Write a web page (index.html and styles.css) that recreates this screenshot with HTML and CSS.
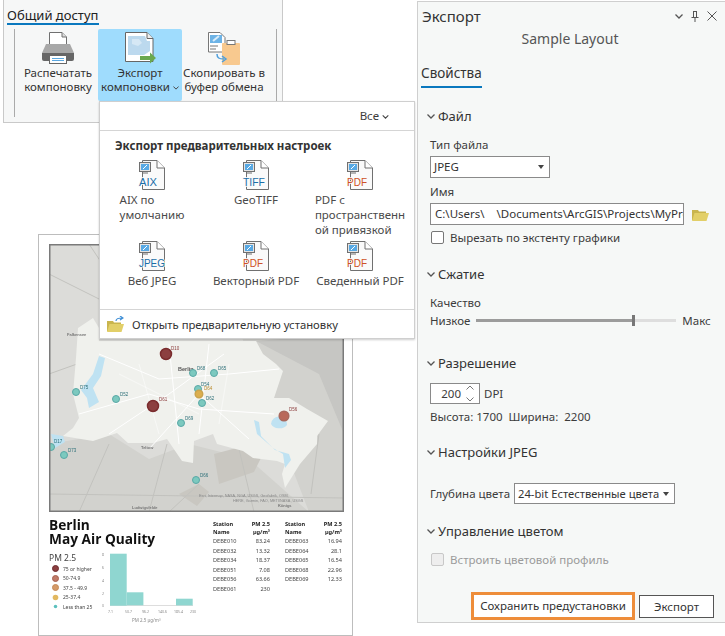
FILE: index.html
```html
<!DOCTYPE html>
<html>
<head>
<title>Экспорт компоновки</title>
<link rel="stylesheet" href="styles.css">
</head>
<body>

<svg class="defs" width="0" height="0">
    <defs>
        <symbol id="doc" viewBox="0 0 26 30">
            <path d="M3.5 .5H18l7.5 7.500V29.5H3.5Z" fill="#fafafa" stroke="#707070"/>
            <path d="M18 .5V8h7.5" fill="#fff" stroke="#707070"/>
            <rect x=".5" y="2.5" width="11" height="9" fill="#e4e4e4" stroke="#707070"/>
            <rect x="2" y="4" width="8" height="6" fill="#58a9e4"/>
            <path d="M4 9l4-4" stroke="#fff"/>
            <path d="M3 13h6" stroke="#707070"/>
        </symbol>
        <symbol id="folder" viewBox="0 0 17 14">
            <path d="M0 3h6l1 1.500h7V13H0Z" fill="#c9b54e"/>
            <path d="M2.500 6H17l-2.500 8H0Z" fill="#e2cf68"/>
        </symbol>
        <symbol id="chev" viewBox="0 0 8 5">
            <path d="M.5.5L4 4 7.500.5" fill="none" stroke="currentColor" stroke-width="1.300"/>
        </symbol>
    </defs>
</svg>

<div class="ribbon window">
    <div class="ribbon-tab">Общий доступ</div>
    <div class="ribbon-row">
        <div class="ribbon-btn first">
            <svg class="ribbon-icon" width="34" height="34" viewBox="0 0 34 34">
                <path d="M8.500 1.500H21l4.500 4.500V15H8.500Z" fill="#fff" stroke="#707070"/>
                <path d="M21 1.500V6h4.500" fill="#ddd" stroke="#707070"/>
                <path d="M5 13h24l4 9H1Z" fill="#a8a8a8"/>
                <path d="M1 22h32v6a2 2 0 0 1-2 2H3a2 2 0 0 1-2-2Z" fill="#666"/>
                <rect x="8.500" y="24.500" width="17" height="8" fill="#fff" stroke="#666"/>
                <path d="M11 27.500h12M11 29.500h12" stroke="#5aa7e0"/>
            </svg>
            <span>Распечатать<br>компоновку</span>
        </div>
        <div class="ribbon-btn active">
            <svg class="ribbon-icon" width="34" height="34" viewBox="0 0 34 34">
                <path d="M2.500 1.500H24l6 6V30.500H2.500Z" fill="#fff" stroke="#666"/>
                <path d="M24 1.500V7.500h6" fill="#eee" stroke="#666"/>
                <path d="M5 5h17l2 5h3v10l-6 4H5Z" fill="#bcd9ee"/>
                <path d="M9 8h7l3 4-4 3-6-2Z" fill="#d6e8f5"/>
                <path d="M17 25h10v-3.500l6 5.500-6 5.500V29H17Z" fill="#6aa84f"/>
            </svg>
            <span>Экспорт<br>компоновки<svg class="chev-sm" width="6" height="4"><use href="#chev"/></svg></span>
        </div>
        <div class="ribbon-btn">
            <svg class="ribbon-icon" width="34" height="34" viewBox="0 0 34 34">
                <path d="M1.500 1.500H13l5 5V21H1.500Z" fill="#fff" stroke="#777"/>
                <rect x="3" y="4" width="12" height="8" fill="#6db3e6"/>
                <path d="M6 10l6-5" stroke="#d8ecfa" stroke-width="2"/>
                <path d="M3 15h8M3 18h6" stroke="#777"/>
                <rect x="15" y="12" width="18" height="22" rx="1" fill="#f8c98f"/>
                <rect x="20" y="9.500" width="8" height="4" fill="#fff" stroke="#777"/>
                <path d="M10 23c0 4 2 5 7 5" fill="none" stroke="#4f9fdc" stroke-width="1.500"/>
                <path d="M15 25l4 3-4 3" fill="none" stroke="#4f9fdc" stroke-width="1.500"/>
            </svg>
            <span>Скопировать в<br>буфер обмена</span>
        </div>
    </div>
</div>

<div class="sheet window">
    <svg class="map" width="295" height="268" viewBox="0 0 295 268">
        <rect width="295" height="268" fill="#dcdcd9"/>
        <path d="M180 60L295 60V268H0V200L60 190 100 215 140 200 200 215 260 268Z" fill="#d2d2ce"/>
        <path d="M207 97L295 90V190L270 130Z" fill="#c6c6c3"/>
        <path d="M165 210l30-8 20 6-10 20-35 12Z M130 250l20-10 10 8-12 14Z" fill="#c9c7c1"/>
        <path d="M0 30L60 60M40 0L80 60M0 130L28 120M120 0L150 70M230 0L260 90M60 200L30 268M118 200L100 268M190 205L205 268M150 240L120 268M270 190L262 250M0 250L295 254" stroke="#c2c2be" fill="none"/>
        <path d="M29 84L44 74 50 84 50 97 207 97 214 110 227 120 234 127 225 154 240 154 258 165 279 177 268 192 268 200 251 220 236 244 233 230 236 220 228 217 204 214 194 207 168 200 164 190 145 197 144 219 133 217 118 195 104 199 79 199 68 189 44 197 14 192 24 184 30 174 24 150 27 114Z" fill="#f0f1ed"/>
        <path d="M50 112l6 2-4 18-8 12 6 14-10 6-2-10-6-8 12-16Z M222 180a8 8 0 1 1 16 1a9 7 0 0 1-16-1Z M205 176l3 14 16 14 10 6 2 14 6-8-2-6-14-4-14-14-2-14Z M2 190l12 2 2 6-10 6Z" fill="#bfe2f2"/>
        <path d="M50 110L110 135 180 130 230 125M30 170L100 150 150 165 225 170M120 100L130 200M160 100L150 190M60 190L120 150 175 110M100 205L150 150 200 195" fill="none" stroke="#fff" stroke-width="1"/>
        <path d="M70 130L150 170M90 120L110 190M180 120L170 180" fill="none" stroke="#fff" stroke-width=".5"/>
        <text class="place" x="18" y="92">Falkensee</text>
        <text class="place city" x="129" y="127">Berlin</text>
        <text class="place" x="92" y="205">Teltow</text>
        <circle class="pt red" cx="117" cy="110" r="5.500"/>
        <circle class="pt red" cx="104" cy="162" r="5.500"/>
        <circle class="pt mid" cx="235" cy="172" r="4.800"/>
        <circle class="pt teal" cx="144" cy="129" r="3.500"/>
        <circle class="pt teal" cx="165" cy="129" r="3.500"/>
        <circle class="pt teal" cx="149" cy="145" r="3.500"/>
        <circle class="pt low" cx="150" cy="150" r="3.800"/>
        <circle class="pt teal" cx="153" cy="159" r="3.500"/>
        <circle class="pt teal" cx="67" cy="155" r="3.500"/>
        <circle class="pt teal" cx="27" cy="148" r="3.500"/>
        <circle class="pt teal" cx="132" cy="179" r="3.500"/>
        <circle class="pt teal" cx="2" cy="203" r="3.500"/>
        <circle class="pt teal" cx="15" cy="211" r="3.500"/>
        <circle class="pt teal" cx="147" cy="236" r="3.500"/>
        <text class="tag rd" x="122" y="106">D10</text>
        <text class="tag rd" x="110" y="157">D61</text>
        <text class="tag rd" x="240" y="167">D56</text>
        <text class="tag" x="148" y="126">D68</text>
        <text class="tag" x="169" y="126">D65</text>
        <text class="tag" x="152" y="142">D54</text>
        <text class="tag or" x="155" y="146">D64</text>
        <text class="tag" x="157" y="156">D62</text>
        <text class="tag" x="71" y="152">D52</text>
        <text class="tag" x="31" y="145">D75</text>
        <text class="tag" x="136" y="176">D69</text>
        <text class="tag" x="5" y="199">D17</text>
        <text class="tag" x="19" y="208">D73</text>
        <text class="tag" x="151" y="233">D66</text>
        <text class="credit" x="150" y="253">Esri, Intermap, NASA, NGA, USGS, Geofabrik, OSM,</text>
        <text class="credit" x="184" y="258">HERE, Garmin, FAO, METI/NASA, USGS</text>
        <text class="place" x="83" y="265">Ludwigsfelde</text>
        <text class="place" x="229" y="263">Königs</text>
        <rect x=".75" y=".75" width="293.500" height="266.500" fill="none" stroke="#7a7a7a" stroke-width="1.500"/>
    </svg>
    <div class="sheet-bottom">
        <div class="sheet-left">
            <h1 class="sheet-title">Berlin<br>May Air Quality</h1>
            <div class="legend-row">
                <div class="legend">
                    <div class="legend-head">PM 2.5</div>
                    <div class="legend-item"><i class="dot d1"></i>75 or higher</div>
                    <div class="legend-item"><i class="dot d2"></i>50-74.9</div>
                    <div class="legend-item"><i class="dot d3"></i>37.5 - 49.9</div>
                    <div class="legend-item"><i class="dot d4"></i>25-37.4</div>
                    <div class="legend-item"><i class="dot d5"></i>Less than 25</div>
                </div>
                <svg class="chart" width="96" height="76" viewBox="0 0 96 76">
                    <path d="M10 55.500H93" stroke="#ddd"/>
                    <rect x="10" y="3.700" width="16.700" height="52" fill="#8fd6d0"/>
                    <rect x="26.700" y="42.300" width="16.700" height="13" fill="#8fd6d0"/>
                    <rect x="76" y="48.700" width="16.700" height="6.700" fill="#8fd6d0"/>
                    <text class="ax" x="2" y="6">8</text>
                    <text class="ax" x="2" y="19">6</text>
                    <text class="ax" x="2" y="32">4</text>
                    <text class="ax" x="2" y="45">2</text>
                    <text class="ax" x="2" y="57">0</text>
                    <text class="ax" x="8" y="63">7.1</text>
                    <text class="ax" x="25" y="63">50.7</text>
                    <text class="ax" x="42" y="63">96.2</text>
                    <text class="ax" x="58" y="63">140.6</text>
                    <text class="ax" x="74" y="63">185.4</text>
                    <text class="ax" x="90" y="63">230</text>
                    <text class="ax-title" x="32" y="72">PM 2.5 µg/m³</text>
                </svg>
            </div>
        </div>
        <div class="stations">
            <div class="st-col">
                <div class="st-row st-head"><span>Station<br>Name</span><span>PM 2.5<br>µg/m³</span></div>
                <div class="st-row"><span>DEBE010</span><span>83.24</span></div>
                <div class="st-row"><span>DEBE032</span><span>13.32</span></div>
                <div class="st-row"><span>DEBE034</span><span>18.37</span></div>
                <div class="st-row"><span>DEBE051</span><span>7.08</span></div>
                <div class="st-row"><span>DEBE056</span><span>63.66</span></div>
                <div class="st-row"><span>DEBE061</span><span>230</span></div>
            </div>
            <div class="st-col">
                <div class="st-row st-head"><span>Station<br>Name</span><span>PM 2.5<br>µg/m³</span></div>
                <div class="st-row"><span>DEBE063</span><span>16.94</span></div>
                <div class="st-row"><span>DEBE064</span><span>28.1</span></div>
                <div class="st-row"><span>DEBE065</span><span>16.54</span></div>
                <div class="st-row"><span>DEBE068</span><span>22.96</span></div>
                <div class="st-row"><span>DEBE069</span><span>12.33</span></div>
            </div>
        </div>
    </div>
</div>

<div class="menu window">
    <div class="menu-top">Все<svg class="chev-sm" width="7" height="4"><use href="#chev"/></svg></div>
    <div class="menu-heading">Экспорт предварительных настроек</div>
    <div class="preset-grid">
        <div class="preset">
            <svg class="doc-wrap" width="26" height="30" viewBox="0 0 26 30"><use href="#doc" width="26" height="30"/><text class="doc-label blue" x="0" y="26" textLength="18" lengthAdjust="spacingAndGlyphs">AIX</text></svg>
            <div class="preset-name">AIX по<br>умолчанию</div>
        </div>
        <div class="preset">
            <svg class="doc-wrap" width="26" height="30" viewBox="0 0 26 30"><use href="#doc" width="26" height="30"/><text class="doc-label blue" x="0" y="26" textLength="22" lengthAdjust="spacingAndGlyphs">TIFF</text></svg>
            <div class="preset-name">GeoTIFF</div>
        </div>
        <div class="preset">
            <svg class="doc-wrap" width="26" height="30" viewBox="0 0 26 30"><use href="#doc" width="26" height="30"/><text class="doc-label orange" x="0" y="26" textLength="20" lengthAdjust="spacingAndGlyphs">PDF</text></svg>
            <div class="preset-name">PDF с<br>пространственн<br>ой привязкой</div>
        </div>
        <div class="preset">
            <svg class="doc-wrap" width="26" height="30" viewBox="0 0 26 30"><use href="#doc" width="26" height="30"/><text class="doc-label jpeg-label blue" x="0" y="26" textLength="26" lengthAdjust="spacingAndGlyphs">JPEG</text></svg>
            <div class="preset-name">Веб JPEG</div>
        </div>
        <div class="preset">
            <svg class="doc-wrap" width="26" height="30" viewBox="0 0 26 30"><use href="#doc" width="26" height="30"/><text class="doc-label orange" x="0" y="26" textLength="20" lengthAdjust="spacingAndGlyphs">PDF</text></svg>
            <div class="preset-name">Векторный PDF</div>
        </div>
        <div class="preset">
            <svg class="doc-wrap" width="26" height="30" viewBox="0 0 26 30"><use href="#doc" width="26" height="30"/><text class="doc-label orange" x="0" y="26" textLength="20" lengthAdjust="spacingAndGlyphs">PDF</text></svg>
            <div class="preset-name">Сведенный PDF</div>
        </div>
    </div>
    <div class="menu-foot">
        <svg width="17" height="16" viewBox="0 0 17 16">
            <use href="#folder" y="2" width="17" height="14"/>
            <path d="M9 5c0-2 2-3 6-3M13 0l3 2-3 2" fill="none" stroke="#3f8fd6" stroke-width="1.200"/>
        </svg>
        <span>Открыть предварительную установку</span>
    </div>
</div>

<div class="panel window">
    <div class="panel-head">
        <span class="panel-title">Экспорт</span>
        <span class="panel-tools">
            <svg width="8" height="5"><use href="#chev"/></svg>
            <svg width="8" height="11" viewBox="0 0 8 11"><path d="M2 .5h4M2.500 1v5M5.500 1v5M.5 6.500h7M4 7v4" fill="none" stroke="#555"/></svg>
            <svg width="10" height="10" viewBox="0 0 10 10"><path d="M.5.5l9 9M9.500.5l-9 9" stroke="#555"/></svg>
        </span>
    </div>
    <div class="panel-sub">Sample Layout</div>
    <div class="panel-tab">Свойства</div>

    <div class="sec-title first"><svg class="sec-chev" width="8" height="5"><use href="#chev"/></svg>Файл</div>
    <div class="field-label">Тип файла</div>
    <div class="combo file-type">JPEG<i class="caret"></i></div>
    <div class="field-label name-label">Имя</div>
    <div class="name-row">
        <div class="path-box">C:\Users\&nbsp;&nbsp;&nbsp;&nbsp;\Documents\ArcGIS\Projects\MyProject</div>
        <svg width="17" height="14" viewBox="0 0 17 14"><use href="#folder" width="17" height="14"/></svg>
    </div>
    <label class="check-row"><i class="check"></i>Вырезать по экстенту графики</label>

    <div class="sec-title compress"><svg class="sec-chev" width="8" height="5"><use href="#chev"/></svg>Сжатие</div>
    <div class="field-label quality">Качество</div>
    <div class="slider-row">
        <span>Низкое</span>
        <div class="slider"><div class="slider-fill"></div><div class="slider-thumb"></div></div>
        <span>Макс</span>
    </div>

    <div class="sec-title resolution"><svg class="sec-chev" width="8" height="5"><use href="#chev"/></svg>Разрешение</div>
    <div class="dpi-row">
        <div class="spin">200
            <svg width="8" height="17" viewBox="0 0 8 17"><path d="M.5 4.500L4 1l3.500 3.500M.5 12.500L4 16l3.500-3.500" fill="none" stroke="#777"/></svg>
        </div>
        <span>DPI</span>
    </div>
    <div class="dims">Высота: 1700&nbsp; Ширина:&nbsp; 2200</div>

    <div class="sec-title jpeg"><svg class="sec-chev" width="8" height="5"><use href="#chev"/></svg>Настройки JPEG</div>
    <div class="depth-row">
        <span>Глубина цвета</span>
        <div class="combo depth">24-bit Естественные цвета<i class="caret"></i></div>
    </div>

    <div class="sec-title color"><svg class="sec-chev" width="8" height="5"><use href="#chev"/></svg>Управление цветом</div>
    <label class="check-row off"><i class="check"></i>Встроить цветовой профиль</label>

    <div class="panel-foot">
        <div class="btn save">Сохранить предустановки</div>
        <div class="btn">Экспорт</div>
    </div>
</div>

</body>
</html>
```

FILE: styles.css
```css
body {
    margin: 0;
    background: #fff;
    font-family: "Noto Sans", sans-serif;
    font-size: 11.5px;
    color: #3c3c3c;
}
.defs {
    position: absolute;
}
.window {
    position: absolute;
    box-sizing: border-box;
}
.chev-sm {
    margin-left: 3px;
    vertical-align: 1px;
    color: #444;
}

/* ribbon */
.ribbon {
    left: 3px;
    top: 0;
    width: 280px;
    height: 123px;
    background: #f6f7f7;
    border: 1px solid #c9c9c9;
    border-top: 0;
}
.ribbon-tab {
    width: 92px;
    height: 17px;
    margin: 6px 0 0 3px;
    font-size: 13px;
    line-height: 18px;
    white-space: nowrap;
    color: #222;
    border-bottom: 2px solid #0a78be;
}
.ribbon-row {
    display: flex;
    margin: 4px 0 0 10px;
    width: 261px;
    height: 88px;
    border-left: 1px solid #aaa;
    border-right: 1px solid #aaa;
}
.ribbon-btn {
    box-sizing: border-box;
    width: 84px;
    height: 72px;
    flex: none;
    text-align: center;
    line-height: 14px;
    border-radius: 2px;
    white-space: nowrap;
    color: #333;
}
.ribbon-btn.first {
    width: 83px;
    padding-left: 3px;
}
.ribbon-btn.active {
    background: #9fdcfd;
}
.ribbon-icon {
    display: block;
    margin: 2px auto 1px;
}

/* layout sheet behind the menu */
.sheet {
    left: 38px;
    top: 234px;
    width: 315px;
    height: 402px;
    padding: 9px 0 0 10px;
    background: #fff;
    border: 1px solid #bdbdbd;
    color: #444;
}
.map {
    display: block;
    filter: blur(.35px);
}
.place {
    font-family: "Liberation Sans", sans-serif;
    font-size: 4px;
    font-weight: bold;
    fill: #777;
}
.city {
    font-size: 5.5px;
    fill: #555;
}
.credit {
    font-family: "Liberation Sans", sans-serif;
    font-size: 3.800px;
    fill: #888;
}
.tag {
    font-family: "Liberation Sans", sans-serif;
    font-size: 4.500px;
    fill: #2c6f78;
}
.tag.rd {
    fill: #8b3a3a;
}
.tag.or {
    fill: #b98a2b;
}
.pt {
    stroke-width: 1.500;
}
.red {
    fill: #8c3f40;
    stroke: #7a2c2e;
}
.mid {
    fill: #b9695a;
    stroke: #a8695e;
}
.low {
    fill: #dcae4e;
    stroke: #c9a34e;
}
.teal {
    fill: #7cc9bf;
    stroke: #5aa8a6;
    stroke-width: 1;
}
.sheet-bottom {
    display: flex;
    filter: blur(.3px);
}
.sheet-left {
    width: 164px;
}
.sheet-title {
    margin: 6px 0 0;
    font-family: "Open Sans", sans-serif;
    font-size: 13.700px;
    line-height: 14px;
    font-weight: 700;
    color: #111;
}
.legend-row {
    display: flex;
}
.legend {
    width: 51px;
    padding-top: 6px;
    white-space: nowrap;
}
.legend-head {
    font-size: 8.500px;
    line-height: 12px;
}
.legend-item {
    display: flex;
    align-items: center;
    height: 9.500px;
    font-size: 5px;
}
.dot {
    box-sizing: border-box;
    width: 7px;
    height: 7px;
    margin: 0 4px 0 3px;
    border-radius: 50%;
}
.d1 {
    background: #8c3f40;
    border: 1px solid #6d2a2b;
}
.d2 {
    background: #c07a68;
    border: 1px solid #a5604f;
}
.d3 {
    background: #d59a68;
    border: 1px solid #c48a58;
}
.d4 {
    background: #e2b860;
    transform: scale(.8);
}
.d5 {
    background: #5cc0bd;
    transform: scale(.5);
}
.chart {
    margin-top: 4px;
}
.ax {
    font-size: 3.500px;
    fill: #888;
}
.ax-title {
    font-size: 4.500px;
    fill: #888;
}
.stations {
    display: flex;
    gap: 15px;
    margin-top: 9px;
    font-size: 5.600px;
}
.st-col {
    width: 57px;
}
.st-row {
    display: flex;
    justify-content: space-between;
    height: 9.600px;
    line-height: 9.600px;
}
.st-head {
    height: 16px;
    line-height: 7.500px;
    font-weight: 700;
    color: #222;
}
.st-head span:last-child {
    text-align: right;
}

/* drop-down menu */
.menu {
    left: 99px;
    top: 101px;
    width: 316px;
    height: 238px;
    background: #fff;
    border: 1px solid #cfcfcf;
    box-shadow: 0 1px 2px rgba(0,0,0,.2);
}
.menu-top {
    height: 28px;
    line-height: 27px;
    padding-right: 25px;
    text-align: right;
    border-bottom: 1px solid #d5d5d5;
}
.menu-heading {
    margin: 7px 0 0 15px;
    line-height: 16px;
    font-weight: 700;
    font-size: 11.500px;
    color: #333;
}
.preset-grid {
    display: grid;
    grid-template-columns: repeat(3, 104px);
    grid-template-rows: 81px 68px;
    margin-top: 6px;
}
.preset {
    display: flex;
    flex-direction: column;
    align-items: center;
}
.doc-wrap {
    display: block;
    flex: none;
    overflow: visible;
}
.doc-label {
    font-family: "Liberation Sans", sans-serif;
    font-size: 11.500px;
    paint-order: stroke;
    stroke: #fafafa;
    stroke-width: 1.500px;
}
.jpeg-label {
    font-size: 10.500px;
}
.blue {
    fill: #1b6ea8;
}
.orange {
    fill: #cf5227;
}
.preset-name {
    margin-top: 2px;
    line-height: 15px;
    white-space: nowrap;
    color: #4a4a4a;
}
.menu-foot {
    display: flex;
    align-items: center;
    gap: 8px;
    height: 28px;
    padding-left: 7px;
    font-size: 11.300px;
    border-top: 1px solid #d5d5d5;
    color: #333;
}

/* export pane */
.panel {
    left: 417px;
    top: 1px;
    width: 308px;
    height: 622px;
    padding-left: 3px;
    background: #f6f8f7;
    border: 1px solid #cfcfcf;
    border-right: 0;
}
.panel-head {
    display: flex;
    justify-content: space-between;
    align-items: center;
    height: 28px;
}
.panel-title {
    margin-left: 1px;
    font-size: 15px;
    color: #333;
}
.panel-tools {
    display: flex;
    align-items: center;
    gap: 8px;
    margin-right: 8px;
    color: #555;
}
.panel-sub {
    width: 298px;
    margin-top: -1px;
    text-align: center;
    font-size: 14px;
    line-height: 20px;
    color: #555;
}
.panel-tab {
    display: inline-block;
    margin-top: 15px;
    height: 22px;
    font-size: 13.500px;
    line-height: 18px;
    color: #333;
    border-bottom: 2px solid #0a78be;
}
.sec-title {
    display: flex;
    align-items: center;
    margin-left: 6px;
    font-size: 13px;
    line-height: 18px;
    color: #333;
}
.sec-chev {
    margin-right: 3px;
    color: #555;
}
.sec-title.first {
    margin-top: 19px;
}
.field-label {
    margin: 12px 0 0 9px;
    line-height: 16px;
}
.combo {
    position: relative;
    box-sizing: border-box;
    height: 22px;
    line-height: 20px;
    padding-left: 3px;
    background: #fff;
    border: 1px solid #8a8a8a;
    color: #333;
    white-space: nowrap;
}
.caret {
    position: absolute;
    right: 5px;
    top: 8px;
    border: 3px solid transparent;
    border-top: 4px solid #444;
    border-bottom: 0;
}
.file-type {
    width: 120px;
    margin: 3px 0 0 9px;
}
.name-label {
    margin-top: 6px;
}
.name-row {
    display: flex;
    align-items: center;
    gap: 8px;
    margin: 3px 0 0 9px;
}
.path-box {
    box-sizing: border-box;
    width: 254px;
    height: 22px;
    line-height: 20px;
    padding-left: 4px;
    overflow: hidden;
    white-space: nowrap;
    background: #fff;
    border: 1px solid #8a8a8a;
    color: #333;
}
.check-row {
    display: flex;
    align-items: center;
    gap: 6px;
    margin: 4px 0 0 10px;
    height: 17px;
}
.check {
    box-sizing: border-box;
    width: 13px;
    height: 13px;
    background: #fff;
    border: 1px solid #777;
    border-radius: 2px;
}
.off {
    color: #9b9b9b;
}
.off .check {
    background: #eee;
    border-color: #c8c8c8;
}
.compress {
    margin-top: 19px;
}
.quality {
    margin-top: 12px;
}
.slider-row {
    display: flex;
    align-items: center;
    gap: 6px;
    margin: 0 0 0 9px;
    height: 18px;
}
.slider {
    position: relative;
    width: 200px;
    height: 3px;
    background: #dedede;
}
.slider-fill {
    width: 157px;
    height: 3px;
    background: #9c9c9c;
}
.slider-thumb {
    position: absolute;
    left: 156px;
    top: -4px;
    width: 3px;
    height: 11px;
    background: #777;
}
.resolution {
    margin-top: 25px;
}
.dpi-row {
    display: flex;
    align-items: center;
    gap: 4px;
    margin: 11px 0 0 9px;
}
.spin {
    display: flex;
    align-items: center;
    justify-content: flex-end;
    gap: 5px;
    box-sizing: border-box;
    width: 50px;
    height: 21px;
    padding-right: 5px;
    background: #fff;
    border: 1px solid #8a8a8a;
}
.dims {
    margin: 5px 0 0 9px;
    line-height: 16px;
}
.jpeg {
    margin-top: 18px;
}
.depth-row {
    display: flex;
    align-items: center;
    gap: 4px;
    margin: 22px 0 0 9px;
}
.depth {
    width: 161px;
    height: 21px;
    font-size: 11.200px;
}
.color {
    margin-top: 18px;
}
.color + .check-row {
    margin-top: 11px;
}
.panel-foot {
    display: flex;
    align-items: center;
    gap: 4px;
    margin: 24px 0 0 50px;
}
.btn {
    box-sizing: border-box;
    width: 75px;
    height: 23px;
    line-height: 21px;
    text-align: center;
    background: #fff;
    border: 1px solid #555;
    color: #333;
}
.btn.save {
    width: 164px;
    height: 28px;
    line-height: 22px;
    border: 3px solid #ee8d3a;
}
```
